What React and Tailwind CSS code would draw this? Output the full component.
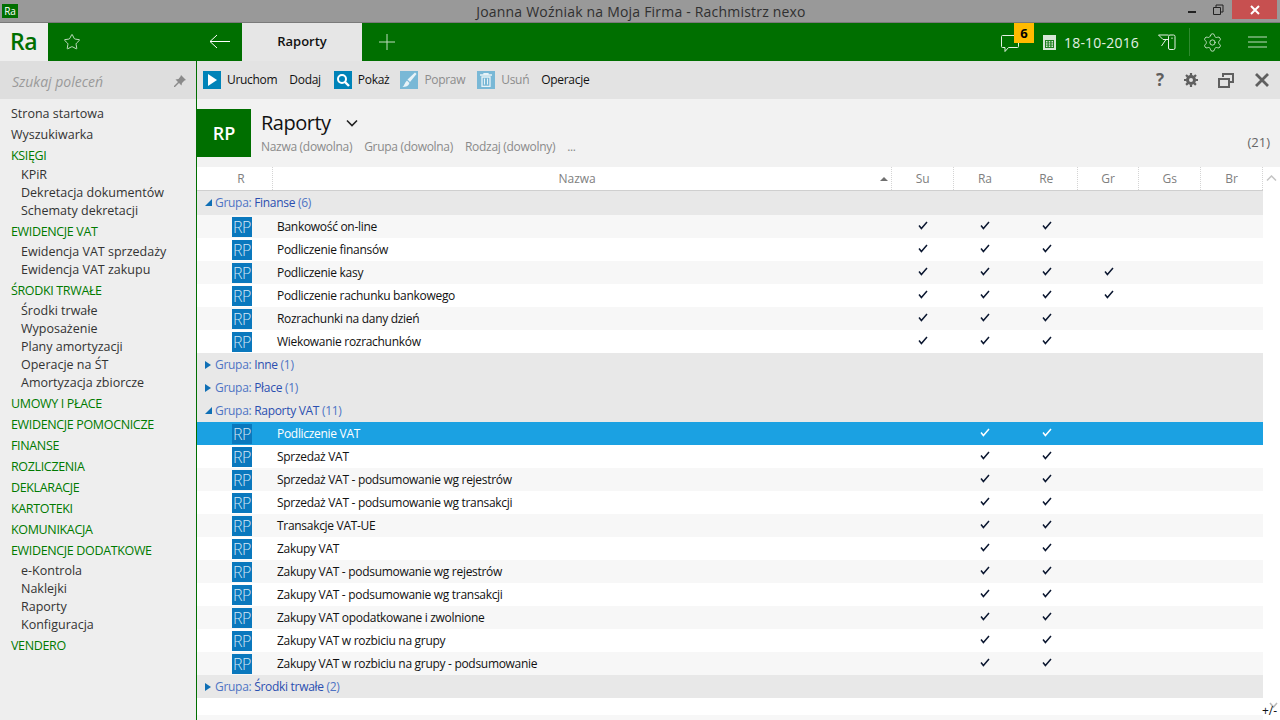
import { Star, Settings } from 'lucide-react';

const font = { fontFamily: '"Open Sans", "Noto Sans", sans-serif' };

const menu = [
  { label: 'Strona startowa' },
  { label: 'Wyszukiwarka' },
  { label: 'KSIĘGI', head: true, tight: true, items: ['KPiR', 'Dekretacja dokumentów', 'Schematy dekretacji'] },
  { label: 'EWIDENCJE VAT', head: true, items: ['Ewidencja VAT sprzedaży', 'Ewidencja VAT zakupu'] },
  { label: 'ŚRODKI TRWAŁE', head: true, items: ['Środki trwałe', 'Wyposażenie', 'Plany amortyzacji', 'Operacje na ŚT', 'Amortyzacja zbiorcze'] },
  { label: 'UMOWY I PŁACE', head: true },
  { label: 'EWIDENCJE POMOCNICZE', head: true },
  { label: 'FINANSE', head: true },
  { label: 'ROZLICZENIA', head: true },
  { label: 'DEKLARACJE', head: true },
  { label: 'KARTOTEKI', head: true },
  { label: 'KOMUNIKACJA', head: true },
  { label: 'EWIDENCJE DODATKOWE', head: true, items: ['e-Kontrola', 'Naklejki', 'Raporty', 'Konfiguracja'] },
  { label: 'VENDERO', head: true },
];

const groups = [
  {
    name: 'Finanse', count: 6, open: true,
    rows: [
      ['Bankowość on-line', 3],
      ['Podliczenie finansów', 3],
      ['Podliczenie kasy', 4],
      ['Podliczenie rachunku bankowego', 4],
      ['Rozrachunki na dany dzień', 3],
      ['Wiekowanie rozrachunków', 3],
    ],
  },
  { name: 'Inne', count: 1 },
  { name: 'Płace', count: 1 },
  {
    name: 'Raporty VAT', count: 11, open: true, vat: true,
    rows: [
      ['Podliczenie VAT'],
      ['Sprzedaż VAT'],
      ['Sprzedaż VAT - podsumowanie wg rejestrów'],
      ['Sprzedaż VAT - podsumowanie wg transakcji'],
      ['Transakcje VAT-UE'],
      ['Zakupy VAT'],
      ['Zakupy VAT - podsumowanie wg rejestrów'],
      ['Zakupy VAT - podsumowanie wg transakcji'],
      ['Zakupy VAT opodatkowane i zwolnione'],
      ['Zakupy VAT w rozbiciu na grupy'],
      ['Zakupy VAT w rozbiciu na grupy - podsumowanie'],
    ],
  },
  { name: 'Środki trwałe', count: 2 },
];

const columns = ['Su', 'Ra', 'Re', 'Gr', 'Gs', 'Br'];

function Check({ light }) {
  return (
    <svg width="10" height="9" viewBox="0 0 10 9" className="mb-[3px]">
      <path d="M1 4.500 L3.400 7.500 L9 1" fill="none" stroke={light ? '#ffffff' : '#0b1730'} strokeWidth="1.500" />
    </svg>
  );
}

function TitleBar() {
  return (
    <div className="relative h-[23px] bg-[#999999] border-b border-[#7a7a7a] flex items-center justify-center pl-[2px]">
      <div className="absolute left-[2px] top-[4px] w-[16px] h-[14px] bg-[#006f00] text-white text-[10px] leading-[14px] text-center">Ra</div>
      <span className="text-[14px] text-[#303030] tracking-[0.2px]">Joanna Woźniak na Moja Firma - Rachmistrz nexo</span>
      <div className="absolute right-[3px] top-0 flex items-start">
        <div className="w-[26px] h-[19px] flex justify-center pr-[2px]">
          <div className="mt-[11px] w-[8px] h-[2px] bg-[#222222]" />
        </div>
        <svg width="26" height="19" viewBox="0 0 26 19">
          <path d="M7.500 7.500h7v7h-7z M10 7V5h7v7h-2" fill="none" stroke="#222222" />
        </svg>
        <div className="w-[45px] h-[19px] bg-[#c75050] flex items-center justify-center">
          <svg width="10" height="10" viewBox="0 0 10 10">
            <path d="M1 1l8 8M9 1l-8 8" stroke="#ffffff" strokeWidth="2" />
          </svg>
        </div>
      </div>
    </div>
  );
}

function TopBar() {
  return (
    <div className="h-[38px] bg-[#006f00] flex items-stretch text-white">
      <div className="w-[48px] bg-[#eeeeee] text-[#006f00] text-[23px] font-semibold leading-[36px] pl-[10px] tracking-[-0.4px]">Ra</div>
      <div className="w-[46px] flex items-center justify-center pl-px">
        <Star size={18} strokeWidth={1} />
      </div>
      <div className="w-[102px]" />
      <div className="w-[46px] flex items-center justify-center pb-px">
        <svg width="21" height="15" viewBox="0 0 21 15">
          <path d="M21 7.500H1M8 1L1 7.500 8 14" fill="none" stroke="#ffffff" />
        </svg>
      </div>
      <div className="w-[120px] bg-[#e6e6e6] text-[#111111] text-[13px] font-semibold flex items-center justify-center">Raporty</div>
      <div className="w-[50px] flex items-center justify-center">
        <svg width="16" height="16" viewBox="0 0 16 16">
          <path d="M8 0v16M0 8h16" stroke="#bfdcbf" />
        </svg>
      </div>
      <div className="flex-1" />
      <div className="relative w-[43px] flex items-center">
        <svg width="20" height="20" viewBox="0 0 20 20" className="mt-[3px]">
          <path d="M2.500 1.500h15a1 1 0 0 1 1 1v10a1 1 0 0 1-1 1h-9l-3.500 4v-4h-2.500a1 1 0 0 1-1-1v-10a1 1 0 0 1 1-1z" fill="none" stroke="#e4f0e4" />
        </svg>
        <div className="absolute left-[14px] top-0 w-[20px] h-[20px] bg-[#ffbb00] text-black text-[13px] font-bold leading-[20px] text-center">6</div>
      </div>
      <div className="w-[21px] flex items-center">
        <svg width="13" height="15" viewBox="0 0 13 15">
          <path d="M0 0h13v15H0z" fill="#d5e6d5" />
          <path d="M2 5h9v8H2z" fill="#1f7f1f" />
          <path d="M3 6h1.500v1.500H3zM5.750 6h1.500v1.500h-1.500zM8.500 6H10v1.500H8.500zM3 8.250h1.500v1.500H3zM5.750 8.250h1.500v1.500h-1.500zM8.500 8.250H10v1.500H8.500zM3 10.500h1.500V12H3zM5.750 10.500h1.500V12h-1.500zM8.500 10.500H10V12H8.500z" fill="#d5e6d5" />
        </svg>
      </div>
      <div className="w-[94px] flex items-center text-[14px] text-[#e4f0e4] tracking-[0.2px]">18-10-2016</div>
      <div className="w-[31px] flex items-center">
        <svg width="18" height="16" viewBox="0 0 18 16">
          <path d="M10.500 1H.500L5 5.500h5.500M8 5.500L3.500 12" fill="none" stroke="#e4f0e4" />
          <rect x="10.500" y="1" width="6.500" height="14.500" rx="1.500" fill="none" stroke="#e4f0e4" />
          <path d="M13.500 3.500h1v1.500h-1z" fill="#e4f0e4" />
        </svg>
      </div>
      <div className="w-[1px] my-[5px] bg-[#2f8a2f]" />
      <div className="w-[44px] flex items-center justify-center text-[#d5e8d5] pt-px">
        <Settings size={21} strokeWidth={1} />
      </div>
      <div className="w-[46px] flex items-center pl-[14px]">
        <svg width="19" height="12" viewBox="0 0 19 12">
          <path d="M0 1h19M0 6h19M0 11h19" stroke="#bfdcbf" />
        </svg>
      </div>
    </div>
  );
}

function Sidebar() {
  return (
    <aside className="w-[198px] shrink-0 border-r-2 border-[#006f00] bg-[#eeeeee] flex flex-col">
      <div className="h-[38px] bg-[#dedede] flex items-center justify-between pl-[12px] pr-[10px] pt-[2px]">
        <span className="italic text-[14px] text-[#9a9a9a]">Szukaj poleceń</span>
        <svg width="12" height="12" viewBox="0 0 12 12">
          <path d="M7 0l5 5-1.500.5L8 8l-.5 2.500L5 8 1 12l-1 0 0-1 4-4-2.500-2.500L4.500 4 6.500 1.500z" fill="#8a8a8a" />
        </svg>
      </div>
      <div className="pt-[4px] flex-1 text-[12.5px] text-[#333333]">
        {menu.map((m) => (
          <div key={m.label}>
            <div className={`h-[21px] leading-[21px] pl-[11px] ${m.head ? 'text-[#007a00] font-medium tracking-[-0.35px]' : ''}`}>{m.label}</div>
            {m.items && (
              <div className={m.tight ? 'pb-px' : 'py-px'}>
                {m.items.map((i) => (
                  <div key={i} className="h-[18px] leading-[18px] pl-[21px]">{i}</div>
                ))}
              </div>
            )}
          </div>
        ))}
      </div>
    </aside>
  );
}

function ToolIcon({ faded, children }) {
  return (
    <span className={`w-[18px] h-[18px] flex items-center justify-center ${faded ? 'bg-[#79b8d6]' : 'bg-[#0083b8]'}`}>
      {children}
    </span>
  );
}

function Toolbar() {
  return (
    <div className="h-[38px] bg-[#e3e3e3] flex items-center pl-[6px] pr-[11px] text-[12px] tracking-[-0.3px]">
      <ToolIcon>
        <svg width="10" height="12" viewBox="0 0 10 12"><path d="M1 0l9 6-9 6z" fill="#ffffff" /></svg>
      </ToolIcon>
      <span className="ml-[6px] text-[#111111]">Uruchom</span>
      <span className="ml-[12px] text-[#111111]">Dodaj</span>
      <span className="ml-[13px]">
        <ToolIcon>
          <svg width="14" height="14" viewBox="0 0 14 14"><circle cx="6" cy="6" r="4" fill="none" stroke="#ffffff" strokeWidth="2" /><path d="M9 9l4 4" stroke="#ffffff" strokeWidth="2.400" /></svg>
        </ToolIcon>
      </span>
      <span className="ml-[6px] text-[#111111]">Pokaż</span>
      <span className="ml-[11px]">
        <ToolIcon faded>
          <svg width="16" height="16" viewBox="0 0 16 16">
            <path d="M14 .5l1.500 1.500L9 10 6.500 7.500z" fill="#e8f3f8" />
            <path d="M6 8.500L8.500 11C7.500 14 5 15 1.500 15c2-1.500 2-4.500 4.500-6.500z" fill="#e8f3f8" />
          </svg>
        </ToolIcon>
      </span>
      <span className="ml-[6px] text-[#8c8c8c]">Popraw</span>
      <span className="ml-[12px]">
        <ToolIcon faded>
          <svg width="12" height="14" viewBox="0 0 12 14"><path d="M0 2h12M4 2V.5h4V2M2 4h8v9.500H2z" fill="none" stroke="#e8f3f8" strokeWidth="1.300" /><path d="M4.500 5.500v6M7.500 5.500v6" stroke="#e8f3f8" /></svg>
        </ToolIcon>
      </span>
      <span className="ml-[6px] text-[#8c8c8c]">Usuń</span>
      <span className="ml-[12px] text-[#111111]">Operacje</span>
      <div className="flex-1" />
      <span className="w-[34px] text-center text-[17px] font-bold text-[#5f5f5f]">?</span>
      <svg width="14" height="14" viewBox="0 0 14 14" className="ml-[7px]">
        <circle cx="7" cy="7" r="3.500" fill="none" stroke="#5f5f5f" strokeWidth="3" />
        <path d="M7 0v14M0 7h14M2 2l10 10M12 2L2 12" stroke="#5f5f5f" strokeWidth="2.200" strokeDasharray="2.500 9 2.500" />
      </svg>
      <svg width="16" height="15" viewBox="0 0 16 15" className="ml-[20px]">
        <path d="M5 4V1h10v8h-4" fill="none" stroke="#5f5f5f" strokeWidth="2" />
        <path d="M1 6h10v8H1z" fill="none" stroke="#5f5f5f" strokeWidth="2" />
      </svg>
      <svg width="14" height="14" viewBox="0 0 14 14" className="ml-[21px]">
        <path d="M1 1l12 12M13 1L1 13" stroke="#5f5f5f" strokeWidth="2.800" />
      </svg>
    </div>
  );
}

function Heading() {
  return (
    <div className="h-[68px] bg-[#f2f2f2] flex pt-[10px]">
      <div className="w-[54px] h-[48px] bg-[#006f00] text-white text-[18px] font-semibold flex items-center justify-center">RP</div>
      <div className="ml-[10px] flex-1 -mt-px">
        <div className="flex items-center h-[29px]">
          <span className="text-[20px] text-[#111111] tracking-[-0.5px]">Raporty</span>
          <svg width="12" height="8" viewBox="0 0 12 8" className="ml-[15px]">
            <path d="M1 1.500l5 5 5-5" fill="none" stroke="#222222" strokeWidth="1.600" />
          </svg>
        </div>
        <div className="flex text-[12px] text-[#8a8a8a] gap-[12px] mt-[1px] tracking-[-0.3px]">
          <span>Nazwa (dowolna)</span>
          <span>Grupa (dowolna)</span>
          <span>Rodzaj (dowolny)</span>
          <span>...</span>
        </div>
      </div>
      <div className="self-end mb-[15px] mr-[10px] text-[13px] text-[#666666]">(21)</div>
    </div>
  );
}

function HeaderCell({ children, className = '', plain }) {
  return (
    <div className={`h-full flex items-center justify-center pt-px ${plain ? '' : 'border-r border-dotted border-[#d4d4d4]'} ${className}`}>
      {children}
    </div>
  );
}

function TableHeader() {
  return (
    <div className="flex h-[24px] bg-white">
      <div className="flex-1 grid grid-cols-[76px_1fr_repeat(6,61.800px)] border-b border-[#cfcfcf] text-[12px] text-[#808080]">
        <HeaderCell className="pl-[13px]">R</HeaderCell>
        <HeaderCell className="relative pr-[10px]">
          Nazwa
          <span className="absolute right-[3px] top-[10px] w-0 h-0 border-x-[4px] border-x-transparent border-b-[4px] border-b-[#707070]" />
        </HeaderCell>
        {columns.map((c) => (
          <HeaderCell key={c} plain={c === 'Ra'}>{c}</HeaderCell>
        ))}
      </div>
      <div className="w-[17px] flex justify-center pt-[8px]">
        <svg width="11" height="6" viewBox="0 0 11 6"><path d="M1 5.500l4.500-4.500 4.500 4.500" fill="none" stroke="#c4c4c4" strokeWidth="1.500" /></svg>
      </div>
    </div>
  );
}

function GroupRow({ group, first }) {
  return (
    <div className={`bg-[#e8e8e8] flex items-center pl-[8px] text-[12px] text-[#4f74c4] tracking-[-0.3px] ${first ? 'h-[24px] pb-px' : 'h-[23px]'}`}>
      {group.open ? (
        <svg width="7" height="7" viewBox="0 0 7 7"><path d="M7 0v7H0z" fill="#0f6fb5" /></svg>
      ) : (
        <svg width="6" height="8" viewBox="0 0 6 8"><path d="M0 0l6 4-6 4z" fill="#0f6fb5" /></svg>
      )}
      <span className={group.open ? 'ml-[3px]' : 'ml-[4px]'}>Grupa: <span className="text-[#2b4fb0]">{group.name}</span> ({group.count})</span>
    </div>
  );
}

function DataRow({ name, checks, selected, even }) {
  const bg = selected ? 'bg-[#1ba1e2] text-white' : even ? 'bg-white text-[#111111]' : 'bg-[#f7f7f7] text-[#111111]';
  return (
    <div className={`h-[23px] grid grid-cols-[75px_1fr_repeat(6,61.800px)] items-center text-[12px] tracking-[-0.3px] ${bg}`}>
      <div className="flex justify-end pr-[20px]">
        <span className="w-[20px] h-[20px] bg-[#0a78bd] text-[#d3e8f5] text-[16px] leading-[20px] text-center font-light tracking-[-0.4px]">RP</span>
      </div>
      <div className="pl-[5px]">{name}</div>
      {columns.map((c, i) => (
        <div key={c} className="flex justify-center">
          {i >= checks.from && i < checks.to && <Check light={selected} />}
        </div>
      ))}
    </div>
  );
}

function Table() {
  return (
    <div className="flex-1 flex flex-col bg-white min-h-0">
      <TableHeader />
      <div className="flex">
        <div className="flex-1">
          {groups.map((g, gi) => (
            <div key={g.name}>
              <GroupRow group={g} first={gi === 0} />
              {g.rows && g.rows.map((r, i) => (
                <DataRow
                  key={r[0]}
                  name={r[0]}
                  even={i % 2 === 1}
                  selected={g.vat && i === 0}
                  checks={g.vat ? { from: 1, to: 3 } : { from: 0, to: r[1] }}
                />
              ))}
            </div>
          ))}
        </div>
        <div className="w-[17px]" />
      </div>
      <div className="relative flex-1 flex flex-col">
        <div className="flex-1" />
        <div className="h-[5px] bg-[#f7f7f7] mr-[17px]" />
        <svg width="9" height="8" viewBox="0 0 9 8" className="absolute right-[2px] bottom-[10px]">
          <path d="M1 1l3.500 4L8 1" fill="none" stroke="#b8b8b8" strokeWidth="1.500" />
        </svg>
        <span className="absolute right-[3px] bottom-[2px] text-[12px] text-[#111111] leading-[14px]">+/-</span>
      </div>
    </div>
  );
}

export default function App() {
  return (
    <div className="w-[1280px] h-[720px] overflow-hidden flex flex-col bg-white" style={font}>
      <TitleBar />
      <TopBar />
      <div className="flex-1 flex min-h-0">
        <Sidebar />
        <main className="flex-1 flex flex-col min-w-0 -ml-px">
          <Toolbar />
          <Heading />
          <Table />
        </main>
      </div>
    </div>
  );
}
